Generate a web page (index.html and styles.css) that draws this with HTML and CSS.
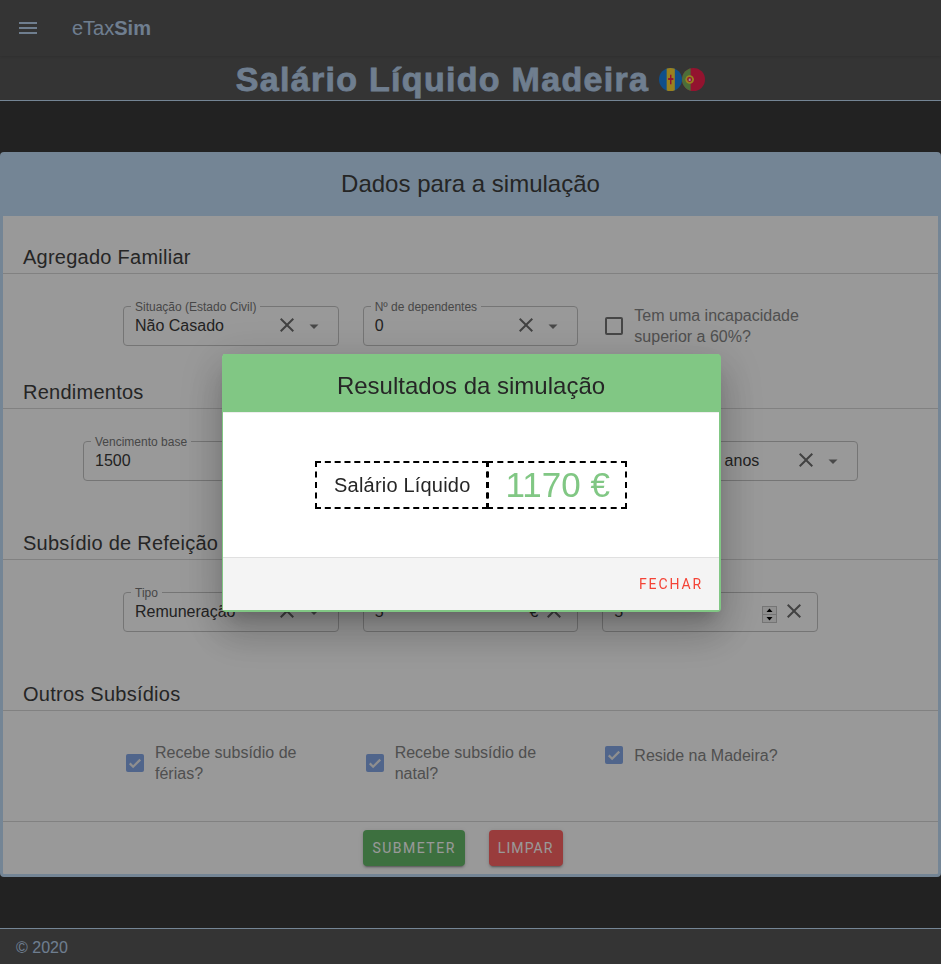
FILE: index.html
```html
<!DOCTYPE html>
<html lang="pt">
<head>
<meta charset="utf-8">
<title>eTaxSim</title>
<link rel="stylesheet" href="styles.css">
</head>
<body>
<header class="appbar">
  <svg class="menu-icon" viewBox="0 0 24 24"><path d="M3 18h18v-2H3v2zm0-5h18v-2H3v2zm0-7v2h18V6H3z"/></svg>
  <div class="brand">eTax<b>Sim</b></div>
</header>
<div class="subheader">
  <h1 class="page-title">Salário Líquido Madeira</h1>
  <div class="flags">
    <svg class="flag" viewBox="0 0 24 24"><defs><clipPath id="c1"><circle cx="12" cy="12" r="12"/></clipPath></defs><g clip-path="url(#c1)"><rect width="24" height="24" fill="#1a84e8"/><rect x="8" width="8.5" height="24" fill="#fdd835"/><rect x="11.5" y="7" width="1.5" height="10" fill="#f5204f"/><rect x="9.5" y="10.5" width="5.5" height="2" fill="#f5204f"/></g></svg>
    <svg class="flag" viewBox="0 0 24 24"><defs><clipPath id="c2"><circle cx="12" cy="12" r="12"/></clipPath></defs><g clip-path="url(#c2)"><rect width="24" height="24" fill="#f5204f"/><rect width="9" height="24" fill="#7db85f"/><circle cx="8" cy="12" r="4.5" fill="#fdd835"/><circle cx="8" cy="12" r="2.6" fill="#f5204f"/><rect x="7" y="11" width="2" height="2.5" fill="#fff"/></g></svg>
  </div>
</div>

<main class="main">
  <section class="panel">
    <h2 class="panel-title">Dados para a simulação</h2>
    <div class="panel-body">
      <h3 class="section-title">Agregado Familiar</h3>
      <div class="row row-first">
        <div class="field">
          <span class="field-label">Situação (Estado Civil)</span>
          <span class="field-value">Não Casado</span>
          <svg class="clear" viewBox="0 0 24 24"><path d="M19 6.41 17.59 5 12 10.59 6.41 5 5 6.41 10.59 12 5 17.59 6.41 19 12 13.41 17.59 19 19 17.59 13.41 12z"/></svg>
          <svg class="arrow" viewBox="0 0 24 24"><path d="M7.5 10.5l4.5 4.5 4.5-4.5z"/></svg>
        </div>
        <div class="field">
          <span class="field-label">Nº de dependentes</span>
          <span class="field-value">0</span>
          <svg class="clear" viewBox="0 0 24 24"><path d="M19 6.41 17.59 5 12 10.59 6.41 5 5 6.41 10.59 12 5 17.59 6.41 19 12 13.41 17.59 19 19 17.59 13.41 12z"/></svg>
          <svg class="arrow" viewBox="0 0 24 24"><path d="M7.5 10.5l4.5 4.5 4.5-4.5z"/></svg>
        </div>
        <label class="check">
          <span class="box"></span>
          <span class="check-text">Tem uma incapacidade superior a 60%?</span>
        </label>
      </div>

      <h3 class="section-title">Rendimentos</h3>
      <div class="row row-wide">
        <div class="field">
          <span class="field-label">Vencimento base</span>
          <span class="field-value">1500</span>
          <span class="suffix">€</span>
          <svg class="clear clear-end" viewBox="0 0 24 24"><path d="M19 6.41 17.59 5 12 10.59 6.41 5 5 6.41 10.59 12 5 17.59 6.41 19 12 13.41 17.59 19 19 17.59 13.41 12z"/></svg>
        </div>
        <div class="field">
          <span class="field-label">Retenção</span>
          <span class="field-value">Normal</span>
          <svg class="clear" viewBox="0 0 24 24"><path d="M19 6.41 17.59 5 12 10.59 6.41 5 5 6.41 10.59 12 5 17.59 6.41 19 12 13.41 17.59 19 19 17.59 13.41 12z"/></svg>
          <svg class="arrow" viewBox="0 0 24 24"><path d="M7.5 10.5l4.5 4.5 4.5-4.5z"/></svg>
        </div>
        <div class="field">
          <span class="field-label">Idade</span>
          <span class="field-value">Menos de 30 anos</span>
          <svg class="clear" viewBox="0 0 24 24"><path d="M19 6.41 17.59 5 12 10.59 6.41 5 5 6.41 10.59 12 5 17.59 6.41 19 12 13.41 17.59 19 19 17.59 13.41 12z"/></svg>
          <svg class="arrow" viewBox="0 0 24 24"><path d="M7.5 10.5l4.5 4.5 4.5-4.5z"/></svg>
        </div>
      </div>

      <h3 class="section-title">Subsídio de Refeição</h3>
      <div class="row">
        <div class="field">
          <span class="field-label">Tipo</span>
          <span class="field-value">Remuneração</span>
          <svg class="clear" viewBox="0 0 24 24"><path d="M19 6.41 17.59 5 12 10.59 6.41 5 5 6.41 10.59 12 5 17.59 6.41 19 12 13.41 17.59 19 19 17.59 13.41 12z"/></svg>
          <svg class="arrow" viewBox="0 0 24 24"><path d="M7.5 10.5l4.5 4.5 4.5-4.5z"/></svg>
        </div>
        <div class="field">
          <span class="field-label">Valor diário</span>
          <span class="field-value">5</span>
          <span class="suffix">€</span>
          <svg class="clear clear-end" viewBox="0 0 24 24"><path d="M19 6.41 17.59 5 12 10.59 6.41 5 5 6.41 10.59 12 5 17.59 6.41 19 12 13.41 17.59 19 19 17.59 13.41 12z"/></svg>
        </div>
        <div class="field">
          <span class="field-label">Dias</span>
          <span class="field-value">5</span>
          <svg class="spinner" viewBox="0 0 15 17"><rect width="15" height="17" fill="#c4c4c4"/><rect x="1" y="1" width="13" height="7" fill="#f0f0f0"/><rect x="1" y="9" width="13" height="7" fill="#f0f0f0"/><path d="M7.5 2.5 10.5 6h-6zM7.5 14.5 4.5 11h6z" fill="#000"/></svg>
          <svg class="clear clear-end" viewBox="0 0 24 24"><path d="M19 6.41 17.59 5 12 10.59 6.41 5 5 6.41 10.59 12 5 17.59 6.41 19 12 13.41 17.59 19 19 17.59 13.41 12z"/></svg>
        </div>
      </div>

      <h3 class="section-title">Outros Subsídios</h3>
      <div class="row row-checks">
        <label class="check">
          <span class="box box-on"><svg viewBox="0 0 24 24"><path d="M5 12.5l4.5 4.5L19 7.5" fill="none" stroke="#eee" stroke-width="3"/></svg></span>
          <span class="check-text">Recebe subsídio de férias?</span>
        </label>
        <label class="check">
          <span class="box box-on"><svg viewBox="0 0 24 24"><path d="M5 12.5l4.5 4.5L19 7.5" fill="none" stroke="#eee" stroke-width="3"/></svg></span>
          <span class="check-text">Recebe subsídio de natal?</span>
        </label>
        <label class="check check-top">
          <span class="box box-on"><svg viewBox="0 0 24 24"><path d="M5 12.5l4.5 4.5L19 7.5" fill="none" stroke="#eee" stroke-width="3"/></svg></span>
          <span class="check-text">Reside na Madeira?</span>
        </label>
      </div>

      <div class="actions">
        <button class="btn btn-green">SUBMETER</button>
        <button class="btn btn-red">LIMPAR</button>
      </div>
    </div>
  </section>
</main>

<footer class="footer">© 2020</footer>

<div class="backdrop">
  <div class="dialog">
    <h2 class="dialog-title">Resultados da simulação</h2>
    <div class="dialog-body">
      <div class="result">
        <div class="result-label">Salário Líquido</div>
        <div class="result-value">1170 €</div>
      </div>
    </div>
    <div class="dialog-actions">
      <button class="btn-text">FECHAR</button>
    </div>
  </div>
</div>
</body>
</html>
```
FILE: styles.css
```css
* { box-sizing: border-box; }
html, body { margin: 0; height: 100%; }
body {
  display: flex;
  flex-direction: column;
  height: 964px;
  overflow: hidden;
  background: #393939;
  font-family: "Liberation Sans", Arial, sans-serif;
  color: #3e3e3e;
}
.appbar {
  height: 56px;
  background: #585858;
  display: flex;
  align-items: center;
  padding-left: 16px;
  position: relative;
  box-shadow: 0 1px 3px rgba(0,0,0,.12);
  flex: none;
}
.menu-icon { width: 24px; height: 24px; fill: #b9d2ee; }
.brand { margin-left: 32px; font-size: 20px; color: #b9d2ee; }
.subheader {
  height: 45px;
  flex: none;
  background: #585858;
  border-bottom: 1px solid #c1def8;
  display: flex;
  align-items: center;
  justify-content: center;
  padding-top: 3px;
}
.page-title {
  margin: -2px 0 0;
  font-size: 34px;
  font-weight: 700;
  color: #b9d2ee;
  letter-spacing: 1.3px;
  -webkit-text-stroke: .8px #b9d2ee;
  line-height: 40px;
}
.flags { display: flex; margin-left: 10px; }
.flag { width: 23px; height: 23px; display: block; }
.main { flex: 1; padding-top: 51px; }
.panel {
  height: 725px;
  border: 3px solid #c1def8;
  border-radius: 4px;
  background: #fff;
  display: flex;
  flex-direction: column;
}
.panel-title {
  margin: 0;
  height: 61px;
  flex: none;
  background: #c1def8;
  font-size: 24px;
  font-weight: 400;
  line-height: 58px;
  text-align: center;
}
.panel-body { flex: 1; display: flex; flex-direction: column; padding-top: 17px; }
.section-title {
  margin: 0;
  height: 41px;
  flex: none;
  font-size: 20px;
  letter-spacing: .25px;
  font-weight: 400;
  line-height: 48px;
  padding-left: 20px;
  border-bottom: 1px solid #d8d8d8;
}
.row {
  display: grid;
  grid-template-columns: repeat(3, 1fr);
  gap: 24px;
  width: 695px;
  margin: 32px auto 38px;
  flex: none;
}
.row-first { margin-bottom: 22px; }
.row-wide { width: 775px; }
.row-checks { margin-top: 30px; margin-bottom: 0; height: 80px; }
.field {
  position: relative;
  height: 40px;
  border: 1px solid #c4c4c4;
  border-radius: 4px;
  display: flex;
  align-items: center;
  padding-left: 11px;
}
.field-label {
  position: absolute;
  top: -6px;
  left: 7px;
  padding: 0 4px;
  background: #fff;
  font-size: 12px;
  line-height: 13px;
  color: #777;
  white-space: nowrap;
}
.field-value { font-size: 16px; flex: 1; color: #393939; }
.suffix { font-size: 16px; margin-right: 39px; color: #393939; }
.clear {
  position: absolute;
  right: 39px;
  top: 6px;
  width: 24px;
  height: 24px;
  fill: #6e6e6e;
}
.clear-end { right: 11px; }
.arrow {
  position: absolute;
  right: 12px;
  top: 7px;
  width: 24px;
  height: 24px;
  fill: #7a7a7a;
}
.spinner { position: absolute; right: 40px; top: 13px; width: 15px; height: 17px; }
.check { display: flex; align-items: center; padding-left: 3px; height: 40px; }
.check-top { align-self: start; }
.box {
  width: 18px;
  height: 18px;
  flex: none;
  border: 2px solid #757575;
  border-radius: 2px;
  margin-right: 11px;
}
.box-on { background: #85a8e8; border: 0; }
.box-on svg { width: 18px; height: 18px; display: block; }
.check-text { font-size: 16px; line-height: 21px; color: #858585; }
.row-checks .check { height: 44px; }
.row-checks .check-top { height: 28px; }
.actions {
  flex: 1;
  border-top: 1px solid #d8d8d8;
  display: flex;
  justify-content: center;
  gap: 24px;
  padding: 8px 15px 0 0;
}
.btn {
  height: 36px;
  border: 0;
  border-radius: 4px;
  padding: 0 9px;
  font-family: Roboto, sans-serif;
  font-size: 14px;
  letter-spacing: 1.5px;
  color: #fff;
  box-shadow: 0 3px 1px -2px rgba(0,0,0,.2), 0 2px 2px 0 rgba(0,0,0,.14), 0 1px 5px 0 rgba(0,0,0,.12);
}
.btn-green { background: #66bb6a; }
.btn-red { background: #ff6464; letter-spacing: 1.1px; }
.footer {
  height: 36px;
  flex: none;
  background: #585858;
  border-top: 1px solid #c1def8;
  color: #b9d2ee;
  font-size: 16px;
  line-height: 37px;
  padding-left: 16px;
}
.backdrop {
  position: fixed;
  inset: 0;
  background: rgba(0,0,0,.4);
  display: flex;
  align-items: center;
  justify-content: center;
  padding: 2px 0 0 2px;
}
.dialog {
  width: 499px;
  height: 258px;
  border: solid #81c784;
  border-width: 0 2px 2px 1px;
  border-radius: 4px;
  background: #fff;
  display: flex;
  flex-direction: column;
  box-shadow: 0 11px 15px -7px rgba(0,0,0,.2), 0 24px 38px 3px rgba(0,0,0,.14), 0 9px 46px 8px rgba(0,0,0,.12);
}
.dialog-title {
  margin: 0;
  height: 59px;
  flex: none;
  background: #81c784;
  color: #262626;
  font-size: 24px;
  font-weight: 400;
  line-height: 64px;
  text-align: center;
  border-bottom: 1px solid #eee;
}
.dialog-body {
  flex: 1;
  display: flex;
  align-items: center;
  justify-content: center;
}
.result { display: flex; }
.result-label {
  border: 2px dashed #000;
  height: 48px;
  padding: 0 16px 0 17px;
  font-size: 20px;
  letter-spacing: .2px;
  line-height: 44px;
  color: #262626;
}
.result-value {
  border: 2px dashed #000;
  height: 48px;
  margin-left: -1px;
  padding: 0 15px 0 16px;
  font-size: 35px;
  line-height: 44px;
  color: #81c784;
}
.dialog-actions {
  height: 53px;
  flex: none;
  background: #f4f4f4;
  border-top: 1px solid #e0e0e0;
  display: flex;
  align-items: center;
  justify-content: flex-end;
  padding-right: 7px;
}
.btn-text {
  border: 0;
  background: none;
  padding: 0 9px;
  font-family: Roboto, sans-serif;
  font-size: 14px;
  letter-spacing: 1.9px;
  color: #f44336;
}
```
